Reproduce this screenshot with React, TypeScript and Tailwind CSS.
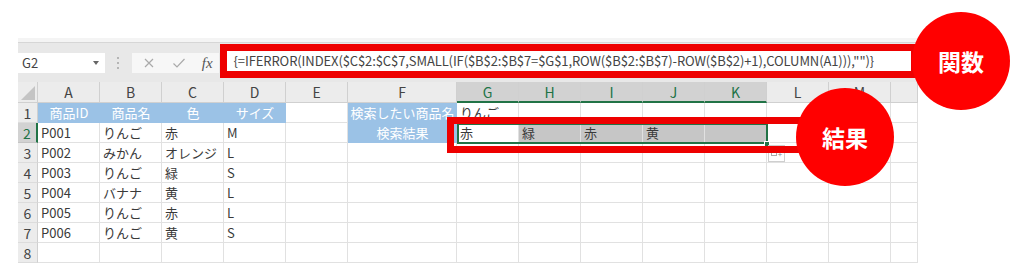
import React from "react";

const cols = ["A", "B", "C", "D", "E", "F", "G", "H", "I", "J", "K", "L", "M", ""];
const selCols = ["G", "H", "I", "J", "K"];

type Cell = { t?: string; blue?: boolean; sel?: boolean; active?: boolean };

const rows: Cell[][] = [
  [
    { t: "商品ID", blue: true },
    { t: "商品名", blue: true },
    { t: "色", blue: true },
    { t: "サイズ", blue: true },
    {},
    { t: "検索したい商品名", blue: true },
    { t: "りんご" },
  ],
  [
    { t: "P001" },
    { t: "りんご" },
    { t: "赤" },
    { t: "M" },
    {},
    { t: "検索結果", blue: true },
    { t: "赤", active: true },
    { t: "緑", sel: true },
    { t: "赤", sel: true },
    { t: "黄", sel: true },
    { sel: true },
  ],
  [{ t: "P002" }, { t: "みかん" }, { t: "オレンジ" }, { t: "L" }],
  [{ t: "P003" }, { t: "りんご" }, { t: "緑" }, { t: "S" }],
  [{ t: "P004" }, { t: "バナナ" }, { t: "黄" }, { t: "L" }],
  [{ t: "P005" }, { t: "りんご" }, { t: "赤" }, { t: "L" }],
  [{ t: "P006" }, { t: "りんご" }, { t: "黄" }, { t: "S" }],
  [],
];

const formula =
  '{=IFERROR(INDEX($C$2:$C$7,SMALL(IF($B$2:$B$7=$G$1,ROW($B$2:$B$7)-ROW($B$2)+1),COLUMN(A1))),"")}';

function GridCell({ c }: { c: Cell }) {
  if (c.blue) {
    return (
      <div className="h-[20px] bg-[#9bc2e6] border-b border-[#9bc2e6] text-white text-[13px] leading-[20px] text-center whitespace-nowrap overflow-visible">
        {c.t}
      </div>
    );
  }
  return (
    <div
      className={`h-[20px] border-r border-b border-[#e1e1e1] text-[13px] leading-[20px] pl-[3px] text-[#3a3a3a] whitespace-nowrap ${
        c.sel ? "bg-[#c6c6c6]" : "bg-white"
      }`}
    >
      {c.t}
    </div>
  );
}

export default function App() {
  return (
    <div className="relative w-[1024px] h-[267px] bg-white overflow-hidden font-['Noto_Sans_CJK_JP',sans-serif]">
      <div className="h-[38px]" />
      <div className="ml-[18px] w-[900px]">
        {/* ribbon bottom */}
        <div className="h-[5px] bg-[#f4f4f4] border-b border-[#d6d6d6]" />
        {/* formula bar */}
        <div className="h-[39px] bg-[#e8e8e8] flex items-start">
          <div className="mt-[10px] w-[87px] h-[20px] bg-white flex items-center justify-between pl-[4px] pr-[6px] text-[13px] text-[#444]">
            <span>G2</span>
            <span className="w-0 h-0 border-l-[3px] border-r-[3px] border-t-[4px] border-l-transparent border-r-transparent border-t-[#666]" />
          </div>
          <div className="mt-[10px] w-[27px] h-[20px] flex flex-col items-center justify-center gap-[3px]">
            <span className="w-[2px] h-[2px] bg-[#b5b5b5]" />
            <span className="w-[2px] h-[2px] bg-[#b5b5b5]" />
            <span className="w-[2px] h-[2px] bg-[#b5b5b5]" />
          </div>
          <div className="mt-[10px] w-[87px] h-[20px] bg-[#f7f7f7] flex items-center text-[#a8a8a8]">
            <svg width="12" height="12" viewBox="0 0 12 12" className="ml-[11px]">
              <path d="M2 2 L10 10 M10 2 L2 10" stroke="#aaa" strokeWidth="1.2" />
            </svg>
            <svg width="14" height="12" viewBox="0 0 14 12" className="ml-[17px]">
              <path d="M1.5 6.5 L5 10 L12.5 2" stroke="#aaa" strokeWidth="1.2" fill="none" />
            </svg>
            <span className="ml-[16px] font-['Liberation_Serif',serif] italic text-[15px] text-[#555] leading-none">
              fx
            </span>
          </div>
          <div className="mt-[1px] ml-[1px] w-[700px] h-[34px] border-[7px] border-[#ee0000] bg-white pl-[7px] text-[13px] tracking-[-0.1px] leading-[20px] text-[#444] whitespace-nowrap overflow-hidden">
            {formula}
          </div>
        </div>

        {/* sheet grid */}
        <div className="relative">
          <div className="grid grid-cols-[20px_repeat(5,62px)_109px_repeat(7,62px)_27px]">
            {/* header row */}
            <div className="h-[21px] bg-[#ececec] border-r border-b border-[#d0d0d0] flex items-end justify-end p-[2px]">
              <span className="w-0 h-0 border-l-[14px] border-b-[14px] border-l-transparent border-b-[#c4c4c4]" />
            </div>
            {cols.map((c, i) => {
              const sel = selCols.includes(c);
              return (
                <div
                  key={i}
                  className={`h-[21px] border-r border-[#d0d0d0] text-[14px] leading-[20px] text-center ${
                    sel
                      ? "bg-[#d2d2d2] text-[#217346] border-b-2 border-b-[#217346]"
                      : "bg-[#ececec] text-[#444] border-b border-b-[#d0d0d0]"
                  }`}
                >
                  {c}
                </div>
              );
            })}

            {rows.map((r, ri) => (
              <React.Fragment key={ri}>
                <div
                  className={`h-[20px] text-[14px] leading-[20px] text-center border-b ${
                    ri === 1
                      ? "bg-[#d2d2d2] text-[#217346] border-r-2 border-r-[#217346] border-b-[#c4c4c4]"
                      : "bg-[#ececec] text-[#444] border-r border-r-[#d0d0d0] border-b-[#dcdcdc]"
                  }`}
                >
                  {ri + 1}
                </div>
                {cols.map((_, ci) => (
                  <GridCell key={ci} c={r[ci] ?? {}} />
                ))}
              </React.Fragment>
            ))}
          </div>

          {/* selection G2:K2 */}
          <div className="absolute left-[439px] top-[41px] w-[311px] h-[21px] border-2 border-[#217346]" />
          <div className="absolute left-[746px] top-[59px] w-[6px] h-[6px] bg-[#217346] border border-white" />
          {/* paste options */}
          <div className="absolute left-[750px] top-[63px] w-[17px] h-[17px] bg-white border border-[#cfcfcf] flex items-center justify-center gap-[1px]">
            <span className="w-[6px] h-[5px] border border-[#aaa]" />
            <span className="text-[8px] leading-none text-[#888]">+</span>
          </div>
        </div>
      </div>

      {/* result highlight */}
      <div className="absolute left-[447px] top-[117px] w-[360px] h-[36px] border-[7px] border-[#ee0000]" />

      {/* callouts */}
      <div className="absolute left-[912px] top-[12px] w-[98px] h-[98px] rounded-full bg-[#ff0000] flex items-center justify-center text-white text-[23px] font-bold">
        関数
      </div>
      <div className="absolute left-[796px] top-[88px] w-[98px] h-[98px] rounded-full bg-[#ff0000] flex items-center justify-center text-white text-[23px] font-bold">
        結果
      </div>
    </div>
  );
}
